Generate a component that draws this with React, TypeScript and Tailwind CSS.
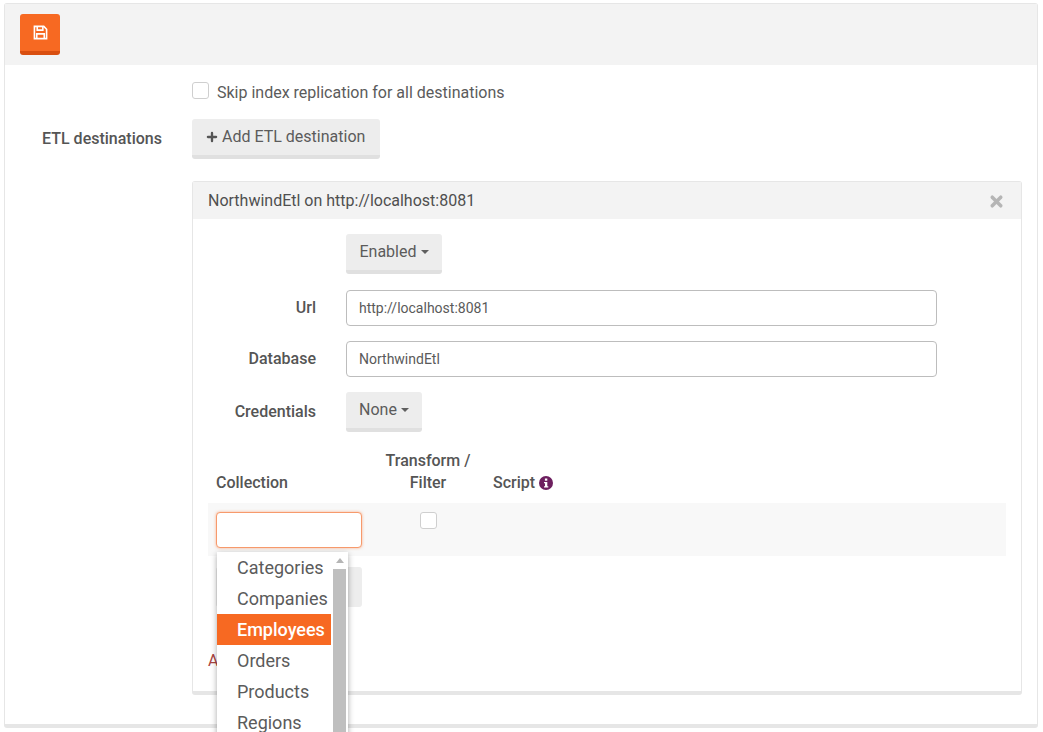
import React from "react";
import { Plus, X } from "lucide-react";

const collections = ["Categories", "Companies", "Employees", "Orders", "Products", "Regions", "Shippers"];

const Caret = () => (
  <span className="ml-[4px] inline-block align-middle border-x-[4px] border-t-[4px] border-x-transparent border-t-[#5f5f5f]" />
);

const GrayButton = ({ children, className = "" }: { children: React.ReactNode; className?: string }) => (
  <div className={`flex h-[40px] items-center rounded-[3px] border-b-[4px] border-[#e0e0e0] bg-[#ededed] text-[16px] text-[#5b5b5b] ${className}`}>
    {children}
  </div>
);

const Row = ({ label, children, className = "" }: { label?: string; children: React.ReactNode; className?: string }) => (
  <div className={`flex items-center ${className}`}>
    <div className="w-[108px] pr-0 text-right text-[16px] font-medium text-[#555]">{label}</div>
    <div className="ml-[30px]">{children}</div>
  </div>
);

const TextBox = ({ value }: { value: string }) => (
  <div className="flex h-[36px] w-[591px] items-center rounded-[4px] border border-[#bdbdbd] px-[12px] text-[14px] text-[#5a5a5a]">
    {value}
  </div>
);

export default function App() {
  return (
    <div className="relative h-[732px] w-[1043px] overflow-hidden bg-white pl-[4px] pr-[5px] pt-[3px] font-['Roboto',sans-serif]">
      <div className="h-[725px] rounded-[3px] border border-b-[4px] border-[#e6e6e6] bg-white">
        <div className="flex h-[61px] items-start bg-[#f3f3f3] pl-[15px] pt-[10px]">
          <button className="flex h-[41px] w-[40px] items-center justify-center rounded-[3px] border-b-[4px] border-[#d94f10] bg-[#f76922] text-white">
            <svg width="15" height="15" viewBox="0 0 16 16" fill="none" stroke="currentColor" strokeWidth="1.7">
              <path d="M1.5 1.5h10l3 3v10h-13z" />
              <path d="M4.5 1.5v4h6v-4M4 14.5v-5h8v5" />
            </svg>
          </button>
        </div>

        <div className="pl-[187px] pt-[17px]">
          <label className="flex items-center text-[16px] leading-[22px] text-[#5b5b5b]">
            <span className="mr-[8px] -mt-[5px] h-[17px] w-[17px] rounded-[3px] border border-[#cfcfcf] bg-white" />
            Skip index replication for all destinations
          </label>
        </div>

        <div className="mt-[15px] flex items-center">
          <div className="w-[157px] text-right text-[16px] font-medium text-[#555]">ETL destinations</div>
          <GrayButton className="ml-[30px] w-[188px] pl-[13px]">
            <Plus size={14} strokeWidth={4} className="mr-[3px] text-[#555]" />
            Add ETL destination
          </GrayButton>
        </div>

        <div className="ml-[187px] mr-[15px] mt-[22px] h-[514px] rounded-[3px] border border-b-[4px] border-[#e6e6e6]">
          <div className="flex h-[37px] items-center justify-between bg-[#f3f3f3] pl-[15px] pr-[16px] text-[16px] text-[#4f4f4f]">
            NorthwindEtl on http://localhost:8081
            <X size={17} strokeWidth={5} className="mt-[2px] text-[#b5b5b5]" />
          </div>

          <div className="pl-[15px] pt-[15px]">
            <Row>
              <GrayButton className="w-[96px] justify-center">
                Enabled
                <Caret />
              </GrayButton>
            </Row>
            <Row label="Url" className="mt-[16px]">
              <TextBox value="http://localhost:8081" />
            </Row>
            <Row label="Database" className="mt-[15px]">
              <TextBox value="NorthwindEtl" />
            </Row>
            <Row label="Credentials" className="mt-[15px]">
              <GrayButton className="w-[76px] justify-center">
                None
                <Caret />
              </GrayButton>
            </Row>
          </div>

          <div className="mt-[14px] flex h-[57px] items-end pb-[9px] pl-[23px] text-[16px] font-medium leading-[22px] text-[#555]">
            <div className="w-[162px]">Collection</div>
            <div className="w-[100px] text-center">
              Transform /
              <br />
              Filter
            </div>
            <div className="ml-[15px] flex items-center">
              Script
              <svg width="14" height="14" viewBox="0 0 14 14" className="ml-[4px]">
                <circle cx="7" cy="7" r="7" fill="#6d1f5f" />
                <rect x="5.9" y="2.5" width="2.4" height="2.2" fill="#fff" />
                <path d="M5 5.9h3.3v4.4h1v1.3H5v-1.3h1V7.2H5z" fill="#fff" />
              </svg>
            </div>
          </div>

          <div className="mx-[15px] flex h-[53px] items-start bg-[#f8f8f8] pl-[8px] pt-[9px]">
            <div className="h-[36px] w-[146px] rounded-[4px] border border-[#f79a6c] bg-white shadow-[0_0_3px_rgba(247,105,34,0.5)]" />
            <div className="ml-[58px] h-[17px] w-[17px] rounded-[3px] border border-[#cfcfcf] bg-white" />
          </div>

          <div className="ml-[23px] mt-[11px] h-[40px] w-[146px] rounded-[3px] bg-[#ededed]" />
          <div className="ml-[15px] mt-[44px] text-[16px] leading-[20px] text-[#a94442]">Add</div>
        </div>
      </div>

      <div className="absolute left-[217px] top-[552px] flex h-[200px] w-[131px] bg-white shadow-[0_2px_6px_rgba(0,0,0,0.35)]">
        <ul className="w-[114px] text-[18px] text-[#5b5b5b]">
          {collections.map((name) => (
            <li
              key={name}
              className={`flex h-[31px] items-center pl-[20px] ${name === "Employees" ? "bg-[#f76922] font-medium text-white" : ""}`}
            >
              {name}
            </li>
          ))}
        </ul>
        <div className="ml-[2px] w-[13px]">
          <div className="mx-auto mt-[6px] h-0 w-0 border-x-[4px] border-b-[5px] border-x-transparent border-b-[#b5b5b5]" />
          <div className="mt-[6px] h-full bg-[#bfbfbf]" />
        </div>
      </div>
    </div>
  );
}
